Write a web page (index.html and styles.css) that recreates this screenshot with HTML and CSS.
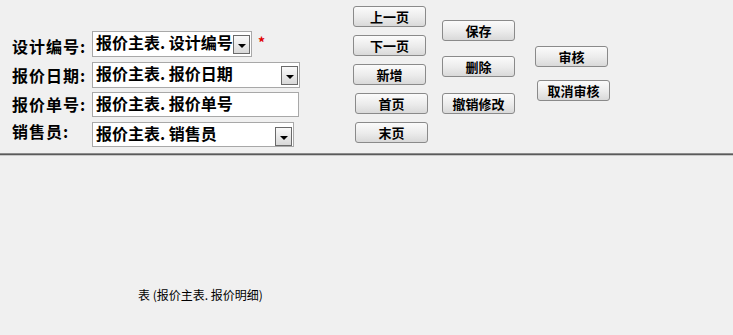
FILE: index.html
```html
<!DOCTYPE html>
<html lang="zh-CN">
<head>
    <meta charset="UTF-8">
    <title>报价主表</title>
    <link rel="stylesheet" href="styles.css">
</head>
<body>
    <div id="header">
        <div class="fields">
            <div class="row row-1">
                <label>设计编号:</label>
                <div class="field w-160">报价主表. 设计编号<span class="drop"></span></div>
                <span class="req">*</span>
            </div>
            <div class="row row-2">
                <label>报价日期:</label>
                <div class="field w-208">报价主表. 报价日期<span class="drop"></span></div>
            </div>
            <div class="row row-3">
                <label>报价单号:</label>
                <div class="field w-207">报价主表. 报价单号</div>
            </div>
            <div class="row row-4">
                <label>销售员:</label>
                <div class="field w-202">报价主表. 销售员<span class="drop"></span></div>
            </div>
        </div>
        <div class="buttons col-a">
            <button>上一页</button>
            <button>下一页</button>
            <button>新增</button>
            <button class="nudge">首页</button>
            <button class="nudge">末页</button>
        </div>
        <div class="buttons col-b">
            <button>保存</button>
            <button>删除</button>
            <button>撤销修改</button>
        </div>
        <div class="buttons col-c">
            <button>审核</button>
            <button class="nudge">取消审核</button>
        </div>
    </div>
    <div id="detail">
        <p class="caption">表 (报价主表. 报价明细)</p>
    </div>
</body>
</html>
```

FILE: styles.css
```css
body {
    margin: 0;
    background-color: #f0f0f0;
    font-family: "Noto Sans CJK SC", "Liberation Sans", sans-serif;
    color: #000;
    width: 733px;
    height: 335px;
    overflow: hidden;
}
#header {
    display: flex;
    height: 153px;
    border-bottom: 1px solid #8c8c8c;
    box-shadow: 0 1px 0 #5a5a5a, 0 2px 0 #c8c8c8;
}
.fields {
    width: 353px;
    padding: 31px 0 0 12px;
    box-sizing: border-box;
}
.row {
    display: flex;
    align-items: flex-start;
}
.row label {
    width: 80px;
    font-size: 16px;
    letter-spacing: 1px;
    font-weight: bold;
    line-height: 20px;
    white-space: nowrap;
}
.row-1 { height: 31px; }
.row-1 label { margin-top: 5px; }
.row-2 { height: 30px; }
.row-2 label { margin-top: 3px; }
.row-3 { height: 30px; }
.row-3 label { margin-top: 2px; }
.row-4 label { margin-top: -1px; }
.field {
    position: relative;
    height: 25px;
    box-sizing: border-box;
    border: 1px solid #a8a8a8;
    background-color: #fff;
    font-size: 16px;
    font-weight: bold;
    line-height: 21px;
    padding-left: 3px;
    white-space: nowrap;
    overflow: hidden;
}
.row-1 .field, .row-2 .field { height: 26px; }
.w-160 { width: 160px; }
.w-208 { width: 208px; }
.w-207 { width: 207px; }
.w-202 { width: 202px; }
.drop {
    position: absolute;
    right: 1px;
    top: 3px;
    width: 17px;
    height: 19px;
    box-sizing: border-box;
    border: 1px solid #6a6a6a;
    background: linear-gradient(#fafafa, #d8d8d8);
}
.drop::after {
    content: "";
    position: absolute;
    left: 4px;
    top: 8px;
    border-left: 4px solid transparent;
    border-right: 4px solid transparent;
    border-top: 4px solid #000;
}
.row-4 .drop { top: 4px; right: 1px; }
.req {
    color: #e00000;
    font-size: 14px;
    font-weight: bold;
    margin: 4px 0 0 6px;
    line-height: 14px;
}
.buttons {
    display: flex;
    flex-direction: column;
}
.buttons button {
    width: 73px;
    height: 21px;
    padding: 0;
    border: 1px solid #8a8a8a;
    border-radius: 3px;
    background: linear-gradient(#fbfbfb, #ebebeb 55%, #d9d9d9);
    font-family: "Noto Sans CJK SC", sans-serif;
    font-size: 13px;
    font-weight: bold;
    line-height: 18px;
    color: #000;
}
.col-a {
    width: 89px;
    padding-top: 6px;
    gap: 8px;
}
.col-a .nudge { margin-left: 2px; }
.col-b {
    width: 93px;
    padding-top: 20px;
    gap: 15px;
}
.col-b button:last-child { margin-top: 1px; }
.col-c {
    padding-top: 46px;
    gap: 13px;
}
.col-c .nudge { margin-left: 2px; }
.caption {
    margin: 0;
    padding: 133px 0 0 138px;
    font-size: 12px;
    line-height: 16px;
}
```
